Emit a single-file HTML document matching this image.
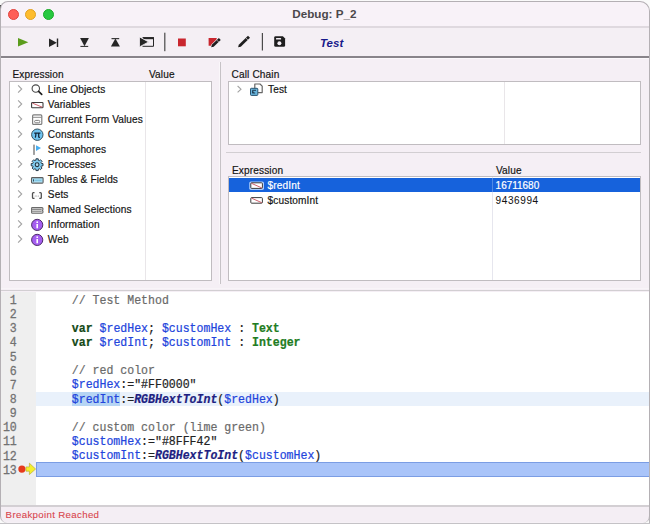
<!DOCTYPE html>
<html><head><meta charset="utf-8">
<style>
*{margin:0;padding:0;box-sizing:border-box}
html,body{width:650px;height:524px;overflow:hidden;background:#fafafa;font-family:"Liberation Sans",sans-serif}
.a{position:absolute}
#win{position:absolute;left:0;top:0;width:650px;height:524px;background:#f5eff5;clip-path:inset(1px 0 1.5px 0 round 8px 10px 7px 7px)}
#frame{position:absolute;left:0;top:1px;width:650px;height:521.5px;border:1px solid #b4b0b4;border-bottom:none;border-radius:8px 10px 7px 7px;pointer-events:none}
#bot{position:absolute;left:0;top:522.5px;width:650px;height:1.5px;background:#c4c2c6}
.tl{position:absolute;width:11px;height:11px;border-radius:50%}
.t{position:absolute;font-size:10.1px;letter-spacing:0.12px;line-height:15px;color:#141414;white-space:nowrap;-webkit-text-stroke:0.18px currentColor}
.box{position:absolute;background:#fff;border:1px solid #c0bcc0}
.chev{position:absolute;width:5px;height:7px}
.code{position:absolute;left:71.8px;-webkit-text-stroke:0.2px currentColor;font-family:"Liberation Mono",monospace;font-size:11.56px;line-height:14.13px;white-space:pre;color:#222;transform:scaleY(1.18);transform-origin:0 10.1px}
.ln{position:absolute;left:0;width:16.8px;text-align:right;font-family:"Liberation Mono",monospace;font-size:11.6px;line-height:14.13px;color:#727272;-webkit-text-stroke:0.25px currentColor;transform:scaleY(1.14);transform-origin:0 10.1px}
.kw{color:#154a18;font-weight:bold}
.ty{color:#1f7d23;font-weight:bold}
.v{color:#2244dc}
.cm{color:#6a6a6a}
.fn{color:#1e1f82;font-weight:bold;font-style:italic}
svg{position:absolute;overflow:visible}
</style></head><body>
<div id="win">
  <!-- page coords -->
  <div class="a" style="left:0;top:0;width:650px;height:26.2px;background:#f8f2f8"></div>
  <div class="a" style="left:0;top:26.2px;width:650px;height:1.8px;background:#dfd9df"></div>
  <div class="tl" style="left:7.9px;top:8.8px;background:#fe5f57;border:0.5px solid #e0443e"></div>
  <div class="tl" style="left:25.4px;top:8.8px;background:#febc2e;border:0.5px solid #dea123"></div>
  <div class="tl" style="left:43px;top:8.8px;background:#28c840;border:0.5px solid #1aab29"></div>
  <div class="a" style="left:-0.6px;top:5.6px;width:650px;text-align:center;font-weight:bold;font-size:11.7px;line-height:15px;color:#4b484b">Debug: P_2</div>
  <!-- toolbar -->
  <div class="a" style="left:0;top:28px;width:650px;height:28px;background:#f4eff4"></div>
  <div class="a" style="left:0;top:56px;width:650px;height:1.5px;background:#88848a"></div>
  <div class="a" style="left:0;top:57.5px;width:650px;height:1px;background:#fbf8fb"></div>

  <!-- toolbar icons -->
  <svg width="650" height="60" style="left:0;top:0">
    <polygon points="18,38 28.3,42.2 18,46.5" fill="#5b9c1c"/>
    <polygon points="49,38.5 56.8,42.7 49,47" fill="#262626"/>
    <rect x="56.8" y="38.5" width="1.4" height="8.5" fill="#262626"/>
    <polygon points="80.1,38.1 88.9,38.1 84.5,46.2" fill="#262626"/>
    <rect x="80.4" y="45.9" width="7.8" height="1" fill="#262626"/>
    <rect x="111.5" y="38.1" width="7.7" height="1.1" fill="#262626"/>
    <polygon points="115.4,38.6 119.9,46.6 110.9,46.6" fill="#262626"/>
    <path d="M142.5,37.7 H153.5 V46.3 H142.5" fill="none" stroke="#262626" stroke-width="1"/>
    <rect x="143" y="37.2" width="11" height="2" fill="#262626"/>
    <polygon points="139.5,36.9 148.6,41.9 139.5,46.9" fill="#262626" stroke="#f4eff4" stroke-width="0.8" stroke-linejoin="miter"/>
    <rect x="164.2" y="32.7" width="1.2" height="18.5" fill="#4a4a4a"/>
    <rect x="178" y="38.5" width="7.8" height="7.8" fill="#c9262e"/>
    <polygon points="208.6,38 216.7,38 216.7,40.6 211.6,45.7 208.6,45.7" fill="#c8262e"/>
    <polygon points="211.2,47.3 211.81,44.85 218.87,38.03 220.73,39.97 213.67,46.79" fill="#1e1e1e" stroke="#f4eff4" stroke-width="1.3" paint-order="stroke" stroke-linejoin="round"/>
    <path d="M216.8,40.1 L218.7,42" stroke="#f4eff4" stroke-width="0.6"/>
    <polygon points="238.1,47.3 238.78,44.64 248,35.76 250,37.84 240.78,46.72" fill="#1e1e1e" stroke-linejoin="round"/>
    <path d="M245.8,37.8 L247.9,40" stroke="#f4eff4" stroke-width="0.6"/>
    <rect x="261.8" y="33" width="1.2" height="17.5" fill="#4a4a4a"/>
    <path d="M274.2,37.6 a1.4,1.4 0 0 1 1.4,-1.4 h7.3 l2.2,2.2 v7 a1.4,1.4 0 0 1 -1.4,1.4 h-8.1 a1.4,1.4 0 0 1 -1.4,-1.4 Z" fill="#1e1e1e"/>
    <rect x="276" y="37.9" width="5.1" height="1.6" rx="0.5" fill="#f4eef4"/>
    <circle cx="279.4" cy="43.2" r="2" fill="#f4eef4"/>
  </svg>
  <div class="a" style="left:320px;top:35.6px;font-weight:bold;font-style:italic;font-size:11.5px;line-height:15px;color:#17198a">Test</div>

  <!-- left panel -->
  <div class="t" style="left:12.5px;top:67px">Expression</div>
  <div class="t" style="left:149px;top:67px">Value</div>
  <div class="box" style="left:9px;top:81px;width:203px;height:200px"></div>
  <div class="a" style="left:145px;top:82px;width:1px;height:198px;background:#e9e6e9"></div>
  <div class="a" style="left:218.6px;top:62px;width:1.4px;height:222.4px;background:#faf7fa"></div><div class="a" style="left:220.2px;top:62px;width:1.3px;height:222.4px;background:#c6c2c6"></div>

  <!-- right top -->
  <div class="t" style="left:231.6px;top:67px">Call Chain</div>
  <div class="box" style="left:228px;top:81px;width:413px;height:64px"></div>
  <div class="a" style="left:504px;top:82px;width:1px;height:62px;background:#e9e6e9"></div>
  <div class="a" style="left:226px;top:152px;width:415px;height:1.4px;background:#d2ced2"></div>

  <!-- right bottom -->
  <div class="t" style="left:232px;top:163px">Expression</div>
  <div class="t" style="left:496px;top:163px">Value</div>
  <div class="box" style="left:228px;top:176px;width:413px;height:105px"></div>
  <div class="a" style="left:229px;top:177.6px;width:411px;height:14.8px;background:#1662dc"></div>
  <div class="a" style="left:492px;top:177px;width:1px;height:103px;background:#e6e6ee"></div>
  <div class="a" style="left:492px;top:177.6px;width:1px;height:14.8px;background:#4f8ae6"></div>
  <div class="t" style="left:267.6px;top:177.8px;color:#fff">$redInt</div>
  <div class="t" style="left:495.6px;top:177.8px;color:#fff;font-size:10px;letter-spacing:-0.02px;-webkit-text-stroke:0.2px #fff">16711680</div>
  <div class="t" style="left:267.6px;top:192.8px">$customInt</div>
  <div class="t" style="left:495.6px;top:192.9px;font-size:10px;letter-spacing:0.6px;-webkit-text-stroke:0.05px #141414">9436994</div>

  <!-- code area -->
  <div class="a" style="left:0;top:287.8px;width:650px;height:1.6px;background:#f8f4f8"></div>
  <div class="a" style="left:0;top:289.7px;width:650px;height:1.5px;background:#d2ced2"></div>
  <div class="a" style="left:0;top:291.5px;width:650px;height:213.5px;background:#fff"></div>
  <div class="a" style="left:0;top:291.5px;width:36px;height:213.5px;background:#efefef"></div>
  <div class="a" style="left:36px;top:392px;width:614px;height:13.5px;background:#e9f1fb"></div>
  <div class="a" style="left:71.8px;top:392px;width:48.2px;height:13.5px;background:#b6d5f4"></div>
  <div class="a" style="left:36px;top:462px;width:614px;height:15px;background:#a9c4f9;border:1px solid #7b9de4"></div>
  <div class="t" style="left:47.8px;top:82.4px">Line Objects</div>
  <div class="t" style="left:47.8px;top:97.4px">Variables</div>
  <div class="t" style="left:47.8px;top:112.4px">Current Form Values</div>
  <div class="t" style="left:47.8px;top:127.4px">Constants</div>
  <div class="t" style="left:47.8px;top:142.4px">Semaphores</div>
  <div class="t" style="left:47.8px;top:157.4px">Processes</div>
  <div class="t" style="left:47.8px;top:172.4px">Tables &amp; Fields</div>
  <div class="t" style="left:47.8px;top:187.4px">Sets</div>
  <div class="t" style="left:47.8px;top:202.4px">Named Selections</div>
  <div class="t" style="left:47.8px;top:217.4px">Information</div>
  <div class="t" style="left:47.8px;top:232.4px">Web</div>
  <svg width="650" height="300" style="left:0;top:0">
    <!-- magnifier -->
    <circle cx="35.8" cy="88.6" r="3.7" fill="none" stroke="#4a4a4a" stroke-width="1.1"/>
    <path d="M38.6,91.4 L41.7,94.3" stroke="#1e1e1e" stroke-width="1.7" stroke-linecap="round"/>
    <!-- variables -->
    <rect x="31.6" y="102.5" width="11.4" height="5.2" rx="0.8" fill="#fff" stroke="#3c3c3c" stroke-width="1.1"/>
    <path d="M32.4,103.1 L42.3,107.2" stroke="#c23848" stroke-width="0.8"/>
    <!-- form -->
    <rect x="32.6" y="114.9" width="9.2" height="9.5" rx="1" fill="#fff" stroke="#7e7e7e" stroke-width="1.2"/>
    <path d="M32.6,117.3 H41.8" stroke="#8a8a8a" stroke-width="1"/>
    <rect x="34.6" y="120.4" width="5.2" height="2.4" rx="1.1" fill="none" stroke="#7e7e7e" stroke-width="1"/>
    <!-- constants -->
    <circle cx="37.3" cy="134.7" r="5.7" fill="#70c4f0" stroke="#34505f" stroke-width="1"/>
    <path d="M34.2,133 H40.4 M35.9,133 Q35.9,136.5 35.2,137.6 M38.7,133 V136.6 Q38.8,137.6 39.9,137.4" fill="none" stroke="#14263a" stroke-width="1.25"/>
    <!-- semaphore -->
    <rect x="33.2" y="144.6" width="1.6" height="10.3" fill="#8a8a8a"/>
    <polygon points="36,145.2 41,148 36,150.9" fill="#47aef0"/>
    <!-- gear -->
    <g transform="translate(37.1,164.7)">
      <path d="M-1.72,-4.16 L-1.24,-4.33 L-1.14,-5.89 L1.14,-5.89 L1.24,-4.33 L1.72,-4.16 L2.18,-3.94 L3.36,-4.97 L4.97,-3.36 L3.94,-2.18 L4.16,-1.72 L4.33,-1.24 L5.89,-1.14 L5.89,1.14 L4.33,1.24 L4.16,1.72 L3.94,2.18 L4.97,3.36 L3.36,4.97 L2.18,3.94 L1.72,4.16 L1.24,4.33 L1.14,5.89 L-1.14,5.89 L-1.24,4.33 L-1.72,4.16 L-2.18,3.94 L-3.36,4.97 L-4.97,3.36 L-3.94,2.18 L-4.16,1.72 L-4.33,1.24 L-5.89,1.14 L-5.89,-1.14 L-4.33,-1.24 L-4.16,-1.72 L-3.94,-2.18 L-4.97,-3.36 L-3.36,-4.97 L-2.18,-3.94 Z" fill="#80ccf0" stroke="#2a3a48" stroke-width="1" stroke-linejoin="round"/>
      <circle r="1.9" fill="#b0dcf0" stroke="#22323e" stroke-width="1.1"/>
    </g>
    <!-- tables -->
    <rect x="31.5" y="177.6" width="11.6" height="5.6" rx="0.9" fill="#a6dcf2" stroke="#5e5e5e" stroke-width="1.1"/>
    <path d="M34.6,180.4 H41.4" stroke="#7ec4e2" stroke-width="1.4"/>
    <rect x="33" y="179.3" width="0.9" height="2.2" fill="#24404e"/>
    <path d="M32,182.9 H42.6" stroke="#8c8c8c" stroke-width="0.7"/>
    <!-- sets -->
    <path d="M34.5,192.6 H33.4 Q32.5,192.6 32.5,193.5 V197.5 Q32.5,198.4 33.4,198.4 H34.5 M39.3,192.6 H40.4 Q41.3,192.6 41.3,193.5 V197.5 Q41.3,198.4 40.4,198.4 H39.3" fill="none" stroke="#505050" stroke-width="1.3"/>
    <circle cx="35.2" cy="196" r="0.5" fill="#8a8a8a"/><circle cx="36.8" cy="196" r="0.5" fill="#8a8a8a"/><circle cx="38.4" cy="196" r="0.5" fill="#8a8a8a"/>
    <!-- named selections -->
    <path d="M32.3,207.6 H41.9 Q43,207.6 43,208.7 V209.3 Q43,210.4 41.9,210.4 Q43,210.4 43,211.5 V212.1 Q43,213.2 41.9,213.2 H32.3 Q31.6,213.2 31.6,212.5 V208.3 Q31.6,207.6 32.3,207.6 Z" fill="#dedede" stroke="#6a6a6a" stroke-width="1.1"/>
    <path d="M32.1,209.5 H41.6 M32.1,211.3 H41.6" stroke="#757575" stroke-width="0.8"/>
    <!-- info -->
    <circle cx="37.2" cy="224.9" r="5.6" fill="#a55ef0" stroke="#4c2a6c" stroke-width="1"/>
    <circle cx="37.2" cy="222.2" r="0.9" fill="#fff"/>
    <path d="M37.2,224 V228.2" stroke="#fff" stroke-width="1.6"/>
    <circle cx="37.2" cy="239.9" r="5.6" fill="#a55ef0" stroke="#4c2a6c" stroke-width="1"/>
    <circle cx="37.2" cy="237.2" r="0.9" fill="#fff"/>
    <path d="M37.2,239 V243.2" stroke="#fff" stroke-width="1.6"/>
    <!-- call chain icon -->
    <path d="M254.8,92.6 V84 H260 L262.2,86.2 V92.6 H258" fill="none" stroke="#666" stroke-width="1.2" stroke-linejoin="round"/>
    <rect x="250.5" y="88.3" width="7.3" height="7.1" rx="0.8" fill="#68b4dc" stroke="#2a5470" stroke-width="1"/>
    <path d="M256,90.3 H252.6 V93 H255.2 M252.6,93 L254,91.8" fill="none" stroke="#1e3a50" stroke-width="1"/>
    <!-- expression row icons -->
    <rect x="249.2" y="181.4" width="14.8" height="8.5" rx="1.6" fill="#a9cbfb"/>
    <rect x="250.8" y="182.8" width="11.6" height="5.6" rx="0.8" fill="#fff" stroke="#3c3c3c" stroke-width="1"/>
    <path d="M251.4,183.3 L261.8,187.9" stroke="#c23848" stroke-width="0.8"/>
    <rect x="250.8" y="197.6" width="11.6" height="5.6" rx="0.8" fill="#fff" stroke="#3c3c3c" stroke-width="1"/>
    <path d="M251.4,198.1 L261.8,202.7" stroke="#c23848" stroke-width="0.8"/>
  </svg>
  <svg width="650" height="300" style="left:0;top:0"><g fill="none" stroke="#a3a3a3" stroke-width="1.1"><path d="M18.1,85.4 L21.7,89 L18.1,92.6" /><path d="M18.1,100.4 L21.7,104 L18.1,107.6" /><path d="M18.1,115.4 L21.7,119 L18.1,122.6" /><path d="M18.1,130.4 L21.7,134 L18.1,137.6" /><path d="M18.1,145.4 L21.7,149 L18.1,152.6" /><path d="M18.1,160.4 L21.7,164 L18.1,167.6" /><path d="M18.1,175.4 L21.7,179 L18.1,182.6" /><path d="M18.1,190.4 L21.7,194 L18.1,197.6" /><path d="M18.1,205.4 L21.7,209 L18.1,212.6" /><path d="M18.1,220.4 L21.7,224 L18.1,227.6" /><path d="M18.1,235.4 L21.7,239 L18.1,242.6" /><path d="M237.6,86 L241,89.2 L237.6,92.4"/></g></svg>
  <div class="t" style="left:268px;top:82px">Test</div>
  <div class="ln" style="top:294.10px">1</div>
  <div class="code" style="top:293.70px"><span class="cm">// Test Method</span></div>
  <div class="ln" style="top:308.23px">2</div>
  <div class="ln" style="top:322.36px">3</div>
  <div class="code" style="top:321.96px"><span class="kw">var</span> <span class="v">$redHex</span>; <span class="v">$customHex</span> : <span class="ty">Text</span></div>
  <div class="ln" style="top:336.49px">4</div>
  <div class="code" style="top:336.09px"><span class="kw">var</span> <span class="v">$redInt</span>; <span class="v">$customInt</span> : <span class="ty">Integer</span></div>
  <div class="ln" style="top:350.62px">5</div>
  <div class="ln" style="top:364.75px">6</div>
  <div class="code" style="top:364.35px"><span class="cm">// red color</span></div>
  <div class="ln" style="top:378.88px">7</div>
  <div class="code" style="top:378.48px"><span class="v">$redHex</span>:="#FF0000"</div>
  <div class="ln" style="top:393.01px">8</div>
  <div class="code" style="top:392.61px"><span class="v">$redInt</span>:=<span class="fn">RGBHextToInt</span>(<span class="v">$redHex</span>)</div>
  <div class="ln" style="top:407.14px">9</div>
  <div class="ln" style="top:421.27px">10</div>
  <div class="code" style="top:420.87px"><span class="cm">// custom color (lime green)</span></div>
  <div class="ln" style="top:435.40px">11</div>
  <div class="code" style="top:435.00px"><span class="v">$customHex</span>:="#8FFF42"</div>
  <div class="ln" style="top:449.53px">12</div>
  <div class="code" style="top:449.13px"><span class="v">$customInt</span>:=<span class="fn">RGBHextToInt</span>(<span class="v">$customHex</span>)</div>
  <div class="ln" style="top:463.66px">13</div>
  <svg width="650" height="524" style="left:0;top:0">
    <circle cx="21.9" cy="469.1" r="3.6" fill="#e63a1c"/>
    <path d="M26,466.9 H29.4 V463.2 L35.6,469 L29.4,474.6 V471.2 H26 Z" fill="#f4ef2c" stroke="#b0a52a" stroke-width="0.6" stroke-linejoin="round"/>
  </svg>
  <div class="a" style="left:0;top:505px;width:650px;height:1.6px;background:#d3cfd3"></div>
  <div class="a" style="left:0;top:506.6px;width:650px;height:17px;background:#f4eef4"></div>
  <div class="t" style="left:5.6px;top:507px;color:#d8454d;font-size:9.7px;letter-spacing:0.33px;-webkit-text-stroke:0.1px currentColor">Breakpoint Reached</div>
</div>
<div id="bot"></div>
<div class="a" style="left:0;top:5px;width:1px;height:9px;background:#2e2e2e"></div>
<div class="a" style="left:649px;top:20px;width:1px;height:503px;background:#b9b7ba"></div>
<div id="frame"></div>
</body></html>
